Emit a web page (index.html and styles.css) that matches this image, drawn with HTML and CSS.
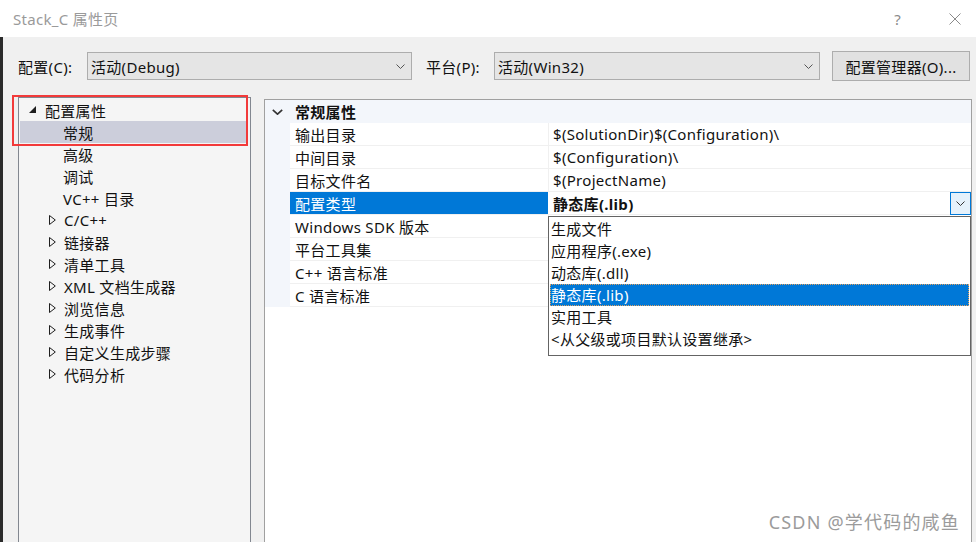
FILE: index.html
```html
<!DOCTYPE html>
<html lang="zh-CN">
<head>
    <meta charset="UTF-8">
    <title>Stack_C 属性页</title>
    <link rel="stylesheet" href="styles.css">
</head>
<body>
<div class="window">
    <div class="titlebar">
        <span class="title">Stack_C 属性页</span>
        <span class="help">?</span>
        <span class="close">
            <svg width="12" height="12" viewBox="0 0 12 12"><path d="M0.5 0.5 L11.5 11.5 M11.5 0.5 L0.5 11.5" stroke="#8a8a8a" stroke-width="1" fill="none"/></svg>
        </span>
    </div>

    <div class="body">
        <div class="toolbar">
            <span class="label label-config">配置(C):</span>
            <div class="select select-config">
                <span>活动(Debug)</span>
                <svg class="chev" width="9" height="5" viewBox="0 0 9 5"><path d="M0.5 0.5 L4.5 4.5 L8.5 0.5" stroke="#555" fill="none"/></svg>
            </div>
            <span class="label label-platform">平台(P):</span>
            <div class="select select-platform">
                <span>活动(Win32)</span>
                <svg class="chev" width="9" height="5" viewBox="0 0 9 5"><path d="M0.5 0.5 L4.5 4.5 L8.5 0.5" stroke="#555" fill="none"/></svg>
            </div>
            <button class="btn">配置管理器(O)...</button>
        </div>

        <div class="content">
            <!-- tree -->
            <div class="tree">
                <div class="node">
                    <svg class="exp" width="7" height="7" viewBox="0 0 7 7"><polygon points="7,0 7,7 0,7" fill="#1e1e1e"/></svg>
                    <span>配置属性</span>
                </div>
                <div class="node child selected"><span>常规</span></div>
                <div class="node child"><span>高级</span></div>
                <div class="node child"><span>调试</span></div>
                <div class="node child"><span>VC++ 目录</span></div>
                <div class="node child collapsed"><svg class="tri" width="7" height="10" viewBox="0 0 7 10"><polygon points="0.5,0.5 6.3,5 0.5,9.5" fill="none" stroke="#1e1e1e"/></svg><span>C/C++</span></div>
                <div class="node child collapsed"><svg class="tri" width="7" height="10" viewBox="0 0 7 10"><polygon points="0.5,0.5 6.3,5 0.5,9.5" fill="none" stroke="#1e1e1e"/></svg><span>链接器</span></div>
                <div class="node child collapsed"><svg class="tri" width="7" height="10" viewBox="0 0 7 10"><polygon points="0.5,0.5 6.3,5 0.5,9.5" fill="none" stroke="#1e1e1e"/></svg><span>清单工具</span></div>
                <div class="node child collapsed"><svg class="tri" width="7" height="10" viewBox="0 0 7 10"><polygon points="0.5,0.5 6.3,5 0.5,9.5" fill="none" stroke="#1e1e1e"/></svg><span>XML 文档生成器</span></div>
                <div class="node child collapsed"><svg class="tri" width="7" height="10" viewBox="0 0 7 10"><polygon points="0.5,0.5 6.3,5 0.5,9.5" fill="none" stroke="#1e1e1e"/></svg><span>浏览信息</span></div>
                <div class="node child collapsed"><svg class="tri" width="7" height="10" viewBox="0 0 7 10"><polygon points="0.5,0.5 6.3,5 0.5,9.5" fill="none" stroke="#1e1e1e"/></svg><span>生成事件</span></div>
                <div class="node child collapsed"><svg class="tri" width="7" height="10" viewBox="0 0 7 10"><polygon points="0.5,0.5 6.3,5 0.5,9.5" fill="none" stroke="#1e1e1e"/></svg><span>自定义生成步骤</span></div>
                <div class="node child collapsed"><svg class="tri" width="7" height="10" viewBox="0 0 7 10"><polygon points="0.5,0.5 6.3,5 0.5,9.5" fill="none" stroke="#1e1e1e"/></svg><span>代码分析</span></div>
            </div>

            <!-- property grid -->
            <div class="grid">
                <div class="category">
                    <span class="cat-gutter">
                        <svg width="11" height="6" viewBox="0 0 11 6"><path d="M0.8 0.8 L5.5 5.2 L10.2 0.8" stroke="#333" stroke-width="1.6" fill="none"/></svg>
                    </span>
                    <span class="cat-name">常规属性</span>
                </div>
                <div class="props">
                    <div class="row"><span class="name">输出目录</span><span class="value">$(SolutionDir)$(Configuration)\</span></div>
                    <div class="row"><span class="name">中间目录</span><span class="value">$(Configuration)\</span></div>
                    <div class="row"><span class="name">目标文件名</span><span class="value">$(ProjectName)</span></div>
                    <div class="row active">
                        <span class="name">配置类型</span>
                        <span class="value"><b>静态库(.lib)</b>
                            <span class="drop-btn"><svg width="9" height="5" viewBox="0 0 9 5"><path d="M0.5 0.5 L4.5 4.5 L8.5 0.5" stroke="#333" fill="none"/></svg></span>
                        </span>
                    </div>
                    <div class="row"><span class="name">Windows SDK 版本</span><span class="value"></span></div>
                    <div class="row"><span class="name">平台工具集</span><span class="value"></span></div>
                    <div class="row"><span class="name">C++ 语言标准</span><span class="value"></span></div>
                    <div class="row"><span class="name">C 语言标准</span><span class="value"></span></div>
                </div>

                <ul class="dropdown">
                    <li>生成文件</li>
                    <li>应用程序(.exe)</li>
                    <li>动态库(.dll)</li>
                    <li class="picked">静态库(.lib)</li>
                    <li>实用工具</li>
                    <li>&lt;从父级或项目默认设置继承&gt;</li>
                </ul>
            </div>

            <div class="mark"></div>
        </div>

        <div class="watermark">CSDN @学代码的咸鱼</div>
    </div>
</div>
</body>
</html>
```

FILE: styles.css
```css
body {
    margin: 0;
    font-family: "Noto Sans", "Noto Sans CJK SC", sans-serif;
    font-size: 15px;
    letter-spacing: 0.3px;
    color: #111;
    background: #f0f0f0;
}

.window {
    width: 976px;
    height: 542px;
    overflow: hidden;
    display: flex;
    flex-direction: column;
}

/* Title bar */
.titlebar {
    height: 37px;
    flex: none;
    background: #fff;
    display: flex;
    align-items: center;
    padding-left: 13px;
    position: relative;
}

.title {
    font-size: 15px;
    color: #9a9a9a;
}

.help {
    margin-left: auto;
    font-size: 15px;
    color: #8a8a8a;
    margin-right: 48px;
}

.close {
    display: flex;
    margin-right: 15px;
}

/* Body */
.body {
    flex: 1;
    border-left: 3px solid #2b2b2b;
    background: #f0f0f0;
    display: flex;
    flex-direction: column;
    position: relative;
    min-height: 0;
}

.toolbar {
    display: flex;
    align-items: center;
    height: 30px;
    margin-top: 14px;
    padding-left: 15px;
    flex: none;
}

.label-config { width: 69px; flex: none; }
.label-platform { width: 68px; margin-left: 14px; flex: none; }

.select {
    height: 26px;
    box-sizing: content-box;
    border: 1px solid #adadad;
    background: #e5e5e5;
    display: flex;
    align-items: center;
    padding-left: 3px;
    padding-right: 6px;
    flex: none;
}

.select-config { width: 314px; }
.select-platform { width: 315px; }

.select .chev {
    margin-left: auto;
}

.btn {
    margin: 0 0 0 12px;
    width: 138px;
    height: 30px;
    flex: none;
    border: 1px solid #adadad;
    background: #e1e1e1;
    font-family: inherit;
    font-size: 15px;
    letter-spacing: 0.3px;
    color: #111;
    padding: 0;
}

/* Content */
.content {
    flex: 1;
    display: flex;
    padding-left: 15px;
    padding-right: 4px;
    margin-top: 16px;
    gap: 13px;
    position: relative;
    min-height: 0;
}

.tree {
    width: 231px;
    flex: none;
    border: 1px solid #828790;
    border-bottom: none;
    background: #f5f5f5;
    padding-top: 1px;
}

.node {
    height: 22px;
    display: flex;
    align-items: center;
    padding-left: 9px;
    margin: 0 4px 0 1px;
}

.node .exp {
    margin-right: 9px;
    margin-top: -1px;
}

.node.child {
    padding-left: 43px;
}

.node.collapsed {
    padding-left: 29px;
}

.node .tri {
    margin-right: 8px;
}

.node.selected {
    background: #cccedb;
}

/* Property grid */
.grid {
    flex: 1;
    margin-top: 2px;
    border: 1px solid #a0a0a0;
    border-bottom: none;
    background: #fff;
    position: relative;
}

.category {
    height: 23px;
    display: flex;
    align-items: center;
    background: #f3f6fb;
}

.cat-gutter {
    width: 25px;
    display: flex;
    padding-left: 7px;
    box-sizing: border-box;
}

.cat-name {
    font-weight: bold;
    padding-left: 5px;
}

.props {
    background: #f3f6fb;
    padding-left: 25px;
}

.row {
    display: flex;
    height: 22px;
    border-bottom: 1px solid #f0f0f0;
    background: #fff;
}

.row .name {
    width: 253px;
    padding-left: 5px;
    display: flex;
    align-items: center;
    flex: none;
}

.row .value {
    flex: 1;
    border-left: 1px solid #f0f0f0;
    padding-left: 4px;
    display: flex;
    align-items: center;
}

.row.active .name {
    background: #0078d7;
    color: #fff;
}

.row.active .value {
    border-left-color: #fff;
}

.drop-btn {
    margin-left: auto;
    width: 19px;
    height: 21px;
    background: #e5f1fb;
    border: 1px solid #0078d7;
    display: flex;
    align-items: center;
    justify-content: center;
    align-self: flex-start;
}

.dropdown {
    position: absolute;
    top: 116px;
    left: 283px;
    width: 421px;
    margin: 0;
    padding: 1px 0 5px;
    list-style: none;
    background: #fff;
    border: 1px solid #646464;
}

.dropdown li {
    height: 22px;
    line-height: 22px;
    padding-left: 1px;
    margin: 0 1px;
    box-sizing: border-box;
}

.dropdown li.picked {
    background: #0078d7;
    color: #fff;
    outline: 1px dotted #e0a060;
    outline-offset: -1px;
}

/* Red highlight box over tree */
.mark {
    position: absolute;
    left: 9px;
    top: -2px;
    width: 232px;
    height: 47px;
    border: 2.5px solid #f23a3a;
}

.watermark {
    position: absolute;
    right: 16px;
    bottom: 8px;
    font-size: 18px;
    letter-spacing: 1.2px;
    color: #9b9b9b;
    text-shadow: 1px 1px 0 #fff;
}
```
